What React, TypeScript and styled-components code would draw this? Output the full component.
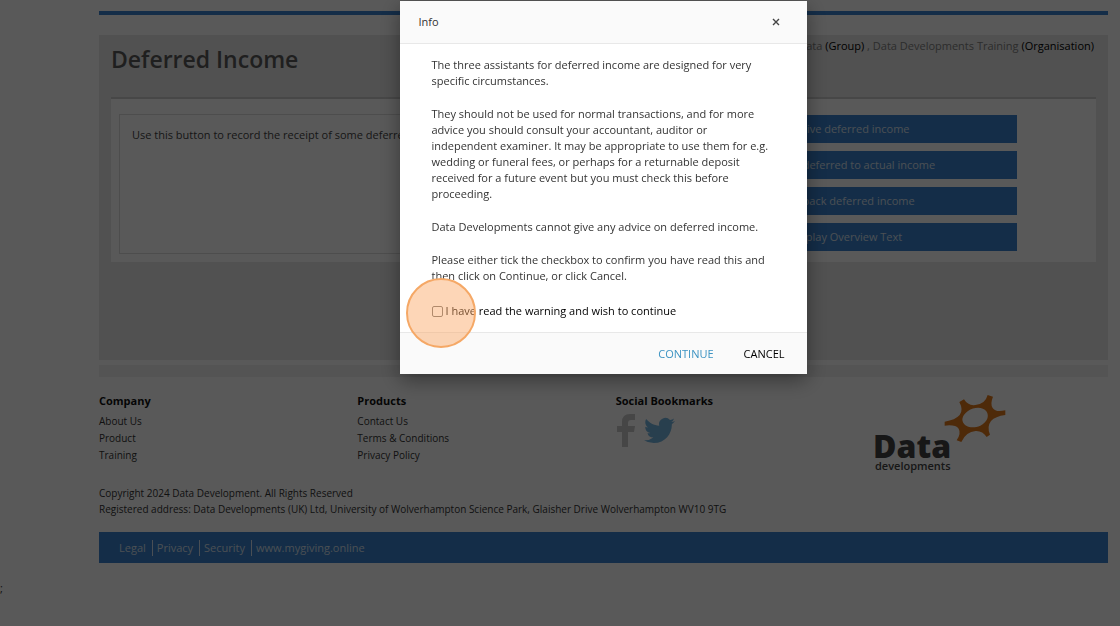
import React from "react";
import styled, { createGlobalStyle } from "styled-components";

const GlobalStyle = createGlobalStyle`
  * { box-sizing: border-box; }
  body {
    margin: 0;
    background: #ffffff;
    color: #333333;
    font-family: "Open Sans", "Noto Sans", sans-serif;
    font-size: 11px;
    font-weight: 400;
    line-height: 16px;
  }
  h1, h2, h3, p, ul { margin: 0; padding: 0; }
  ul { list-style: none; }
  button { font: inherit; cursor: pointer; border: 0; }
  a { color: inherit; text-decoration: none; }
`;

const Page = styled.div`
  min-height: 100vh;
  display: flex;
  flex-direction: column;
`;

const Content = styled.div`
  padding: 11px 12px 0 99px;
`;

const TopRule = styled.div`
  height: 4px;
  background: #3981ce;
`;

const Main = styled.main`
  margin-top: 20px;
  padding: 0 12px;
  min-height: 325px;
  background: #e8e8e8;
`;

const MainHeader = styled.header`
  display: flex;
  justify-content: space-between;
  height: 62px;
  padding: 2px 2px 0 0;
`;

const Title = styled.h1`
  padding-top: 6px;
  font-size: 23px;
  line-height: 32px;
  font-weight: 550;
  color: #5a5a5a;
`;

const Context = styled.p`
  color: #808080;
  line-height: 18px;
  strong { color: #000000; font-weight: 500; }
`;

const Panel = styled.section`
  display: grid;
  grid-template-columns: 1fr 342px;
  column-gap: 24px;
  padding: 15px 79px 8px 8px;
  border-top: 2px solid #cccccc;
  background: #ffffff;
`;

const Description = styled.p`
  height: 140px;
  padding: 12px;
  border: 1px solid #dddddd;
  color: #444444;
`;

const Actions = styled.div`
  display: flex;
  flex-direction: column;
  gap: 8px;
  padding-top: 1px;
`;

const Action = styled.button`
  height: 28px;
  background: #3981ce;
  color: #d6e2ee;
`;

const Strip = styled.div`
  height: 12px;
  margin-top: 5px;
  background: #f0f0f0;
`;

const FooterGrid = styled.footer`
  display: grid;
  grid-template-columns: repeat(3, 1fr) 234px;
  margin-top: 16px;
`;

const FooterHeading = styled.h3`
  font-size: 11px;
  line-height: 16px;
  font-weight: 700;
  color: #111111;
`;

const FooterLinks = styled.ul`
  margin-top: 4px;
  font-size: 10px;
  line-height: 17px;
`;

const Socials = styled.div`
  display: flex;
  align-items: center;
  gap: 7px;
  margin-top: 4px;
  svg { display: block; }
`;

const Logo = styled.svg`
  display: block;
`;

const Legal = styled.div`
  margin-top: 10px;
  font-size: 10px;
`;

const BottomBar = styled.nav`
  display: flex;
  align-items: center;
  height: 31px;
  margin-top: 15px;
  padding: 0 20px;
  background: #3981ce;
  color: #d6e2ee;
`;

const BarLink = styled.a`
  padding: 0 6px 0 4px;
  border-right: 1px solid #d5e3f2;
  &:first-child { padding-left: 0; }
  &:last-child { border-right: 0; }
`;

const StrayText = styled.p`
  margin-top: 17px;
`;

const Overlay = styled.div`
  position: fixed;
  inset: 0;
  display: flex;
  justify-content: center;
  align-items: flex-start;
  padding: 1px 13px 0 99px;
  background: rgba(0, 0, 0, 0.65);
`;

const Dialog = styled.section`
  width: 100%;
  max-width: 407px;
  background: #ffffff;
  box-shadow: 0 6px 20px rgba(0, 0, 0, 0.4);
`;

const DialogHeader = styled.header`
  display: flex;
  align-items: center;
  justify-content: space-between;
  height: 43px;
  padding: 0 25px 0 19px;
  background: #fafafa;
  border-bottom: 1px solid #e8e8e8;
`;

const DialogTitle = styled.h2`
  font-size: 11px;
  line-height: 16px;
  font-weight: 500;
`;

const Close = styled.button`
  padding: 2px;
  background: transparent;
  svg { display: block; }
`;

const DialogBody = styled.div`
  display: flex;
  flex-direction: column;
  gap: 17px;
  padding: 13px 32px;
`;

const Confirm = styled.label`
  display: flex;
  align-items: center;
  gap: 3px;
  margin-top: 2px;
  color: #000000;
`;

const CheckWrap = styled.span`
  position: relative;
  display: flex;
`;

const Check = styled.input`
  appearance: none;
  width: 11px;
  height: 11px;
  margin: 0;
  border: 1px solid #767676;
  border-radius: 2px;
  background: #ffffff;
  &:checked { background: #3981ce; }
`;

const Spotlight = styled.span`
  position: absolute;
  top: 50%;
  left: 50%;
  width: 70px;
  height: 70px;
  margin: -33px 0 0 -31px;
  border: 2px solid #f5a866;
  border-radius: 50%;
  background: rgba(250, 165, 95, 0.45);
  pointer-events: none;
`;

const DialogFooter = styled.footer`
  display: flex;
  justify-content: flex-end;
  align-items: center;
  gap: 30px;
  height: 42px;
  padding: 0 22px;
  background: #fafafa;
  border-top: 1px solid #e8e8e8;
`;

const TextButton = styled.button<{ $accent?: boolean }>`
  padding: 0;
  background: transparent;
  color: ${(p) => (p.$accent ? "#3c93c2" : "#000000")};
`;

const actions = [
  "Receive deferred income",
  "Transfer deferred to actual income",
  "Give back deferred income",
  "Display Overview Text",
];

const columns = [
  { title: "Company", links: ["About Us", "Product", "Training"] },
  { title: "Products", links: ["Contact Us", "Terms & Conditions", "Privacy Policy"] },
];

const barLinks = ["Legal", "Privacy", "Security", "www.mygiving.online"];

function DataLogo() {
  return (
    <Logo width="132" height="82" viewBox="0 0 132 82" role="img" aria-label="Data developments">
      <g transform="translate(-14 -13) scale(0.3333)">
        <path
          fill="#e0781c"
          fillRule="evenodd"
          d="M298 66 L312 58 Q324 78 346 75 Q376 72 383 45 L399 50 Q390 72 398 84 Q407 98 436 91 L436 105 Q406 109 393 123 Q380 140 390 164 L380 171 Q368 152 347 153 Q318 155 304 186 L290 181 Q304 160 296 146 Q286 133 254 137 L254 125 Q286 120 299 105 Q311 90 298 66 Z M308 124 C313 142 339 147 361 137 C382 127 389 108 379 94 C369 80 343 80 324 93 C311 102 305 114 308 124 Z"
        />
      </g>
      <text x="-1" y="65" fontFamily="Open Sans, sans-serif" fontWeight="800" fontSize="32" fill="#444444">Data</text>
      <text x="1" y="77" fontFamily="Open Sans, sans-serif" fontWeight="600" fontSize="11" fill="#444444">developments</text>
    </Logo>
  );
}

export default function App() {
  return (
    <Page>
      <GlobalStyle />
      <Content>
        <TopRule />
        <Main>
          <MainHeader>
            <Title>Deferred Income</Title>
            <Context>
              Data <strong>(Group)</strong> , Data Developments Training <strong>(Organisation)</strong>
            </Context>
          </MainHeader>
          <Panel>
            <Description>Use this button to record the receipt of some deferred income.</Description>
            <Actions>
              {actions.map((label) => (
                <Action key={label} type="button">{label}</Action>
              ))}
            </Actions>
          </Panel>
        </Main>
        <Strip />
        <FooterGrid>
          {columns.map((column) => (
            <div key={column.title}>
              <FooterHeading>{column.title}</FooterHeading>
              <FooterLinks>
                {column.links.map((link) => (
                  <li key={link}><a href="#">{link}</a></li>
                ))}
              </FooterLinks>
            </div>
          ))}
          <div>
            <FooterHeading>Social Bookmarks</FooterHeading>
            <Socials>
              <a href="#" aria-label="Facebook">
                <svg width="21" height="34" viewBox="0 0 21 34" fill="#c8c8c8">
                  <path d="M6 34V19H1v-6h5V9q0-8 8-8h5v6h-4q-3 0-3 3v3h7l-1 6h-6v15z" />
                </svg>
              </a>
              <a href="#" aria-label="Twitter">
                <svg width="31" height="31" viewBox="0 0 24 24" fill="#74b4de">
                  <path d="M23.954 4.569a10 10 0 0 1-2.825.775 4.958 4.958 0 0 0 2.163-2.723 9.99 9.99 0 0 1-3.127 1.184 4.92 4.92 0 0 0-8.384 4.482C7.691 8.094 4.066 6.13 1.64 3.161a4.822 4.822 0 0 0-.666 2.475c0 1.71.87 3.213 2.188 4.096a4.904 4.904 0 0 1-2.228-.616v.061a4.923 4.923 0 0 0 3.946 4.827 4.996 4.996 0 0 1-2.212.085 4.937 4.937 0 0 0 4.604 3.417 9.868 9.868 0 0 1-6.102 2.105c-.39 0-.779-.023-1.17-.067a13.995 13.995 0 0 0 7.557 2.209c9.054 0 13.999-7.496 13.999-13.986 0-.209 0-.42-.015-.63a9.936 9.936 0 0 0 2.46-2.548z" />
                </svg>
              </a>
            </Socials>
          </div>
          <DataLogo />
        </FooterGrid>
        <Legal>
          <p>Copyright 2024 Data Development. All Rights Reserved</p>
          <p>
            Registered address: Data Developments (UK) Ltd, University of Wolverhampton Science Park, Glaisher Drive
            Wolverhampton WV10 9TG
          </p>
        </Legal>
        <BottomBar>
          {barLinks.map((label) => (
            <BarLink key={label} href="#">{label}</BarLink>
          ))}
        </BottomBar>
      </Content>
      <StrayText>;</StrayText>
      <Overlay>
        <Dialog role="dialog" aria-modal="true" aria-labelledby="dialog-title">
          <DialogHeader>
            <DialogTitle id="dialog-title">Info</DialogTitle>
            <Close type="button" aria-label="Close">
              <svg width="8" height="8" viewBox="0 0 8 8" stroke="#444444" strokeWidth="1.4">
                <path d="M1 1l6 6M7 1L1 7" />
              </svg>
            </Close>
          </DialogHeader>
          <DialogBody>
            <p>The three assistants for deferred income are designed for very specific circumstances.</p>
            <p>
              They should not be used for normal transactions, and for more advice you should consult your accountant,
              auditor or independent examiner. It may be appropriate to use them for e.g. wedding or funeral fees, or
              perhaps for a returnable deposit received for a future event but you must check this before proceeding.
            </p>
            <p>Data Developments cannot give any advice on deferred income.</p>
            <p>
              Please either tick the checkbox to confirm you have read this and then click on Continue, or click Cancel.
            </p>
            <Confirm>
              <CheckWrap>
                <Check type="checkbox" />
                <Spotlight />
              </CheckWrap>
              I have read the warning and wish to continue
            </Confirm>
          </DialogBody>
          <DialogFooter>
            <TextButton type="button" $accent>CONTINUE</TextButton>
            <TextButton type="button">CANCEL</TextButton>
          </DialogFooter>
        </Dialog>
      </Overlay>
    </Page>
  );
}
